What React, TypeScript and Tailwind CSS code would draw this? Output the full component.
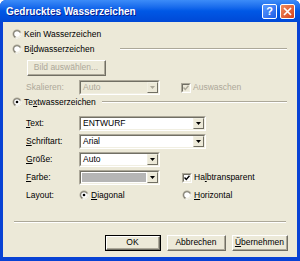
import React from "react";

const FACE = "bg-[#ECE9D8]";

const Radio = ({ checked = false }: { checked?: boolean }) => (
    <svg width="10" height="10" viewBox="0 0 10 10" className="shrink-0">
        <circle cx="5" cy="5" r="4.5" fill="#ACA899" />
        <path d="M9.2 3.2 A4.5 4.5 0 0 1 3.2 9.2 L5 5 Z" fill="#fff" />
        <circle cx="5" cy="5" r="3.6" fill="#716F64" />
        <path d="M8.4 3.4 A3.6 3.6 0 0 1 3.4 8.4 L5 5 Z" fill="#F1EFE2" />
        <circle cx="5" cy="5" r="2.8" fill="#fff" />
        {checked && <circle cx="5" cy="5" r="1.3" fill="#000" />}
    </svg>
);

const Check = ({ checked = false, disabled = false }: { checked?: boolean; disabled?: boolean }) => (
    <div className="w-[10px] h-[10px] shrink-0 border border-t-[#ACA899] border-l-[#ACA899] border-b-white border-r-white">
        <div className={`w-full h-full border border-t-[#716F64] border-l-[#716F64] border-b-[#F1EFE2] border-r-[#F1EFE2] ${disabled ? FACE : "bg-white"}`}>
            {checked && (
                <svg width="6" height="6" viewBox="0 0 6 6" className="block">
                    <path d="M0.5 2.5 L2.3 4.4 L5.5 0.8" stroke={disabled ? "#ACA899" : "#000"} strokeWidth="1.4" fill="none" />
                </svg>
            )}
        </div>
    </div>
);

const DropBtn = ({ disabled = false }: { disabled?: boolean }) => (
    <div className={`w-[11px] h-full ${FACE} border border-t-[#F1EFE2] border-l-[#F1EFE2] border-b-[#716F64] border-r-[#716F64] flex items-center justify-center`}>
        <svg width="5" height="3" viewBox="0 0 5 3">
            <path d="M0 0 H5 L2.5 3 Z" fill={disabled ? "#ACA899" : "#000"} />
        </svg>
    </div>
);

const Combo = ({ value = "", width, disabled = false, swatch = false, drop = true }: { value?: string; width: string; disabled?: boolean; swatch?: boolean; drop?: boolean }) => (
    <div className={`h-[15px] ${width} flex border border-t-[#ACA899] border-l-[#ACA899] border-b-white border-r-white`}>
        <div className={`flex flex-1 min-w-0 border border-t-[#716F64] border-l-[#716F64] border-b-[#F1EFE2] border-r-[#F1EFE2] ${disabled ? FACE : "bg-white"}`}>
            {swatch ? (
                <div className="flex-1 p-[1px]"><div className="w-full h-full bg-[#B5B5B5]" /></div>
            ) : (
                <span className={`flex-1 pl-[2px] leading-[11px] ${disabled ? "text-[#ACA899]" : "text-black"}`}>{value}</span>
            )}
            {drop && <DropBtn disabled={disabled} />}
        </div>
    </div>
);

const Etch = ({ className = "" }: { className?: string }) => (
    <div className={`h-[2px] border-t border-t-[#ACA899] border-b border-b-white ${className}`} />
);

const Btn = ({ children, width, isDefault = false, disabled = false }: { children: React.ReactNode; width: string; isDefault?: boolean; disabled?: boolean }) => (
    <div className={`h-[16px] ${width} ${isDefault ? "border border-black" : ""}`}>
        <div className="w-full h-full border border-t-white border-l-white border-b-[#716F64] border-r-[#716F64]">
            <div className={`w-full h-full flex items-center justify-center border-r border-b border-r-[#ACA899] border-b-[#ACA899] ${disabled ? "text-[#ACA899]" : "text-black"}`}>
                {children}
            </div>
        </div>
    </div>
);

const TitleButton = ({ kind }: { kind: "help" | "close" }) => (
    <div className={`w-[15px] h-[15px] rounded-[2px] border border-white flex items-center justify-center ${kind === "help" ? "bg-gradient-to-br from-[#5B9BFF] to-[#1E5BE6]" : "bg-gradient-to-br from-[#F08A5C] to-[#D4401A]"}`}>
        {kind === "help" ? (
            <span className="text-white font-bold text-[11px] leading-none">?</span>
        ) : (
            <svg width="9" height="9" viewBox="0 0 9 9">
                <path d="M1 1 L8 8 M8 1 L1 8" stroke="#fff" strokeWidth="1.7" />
            </svg>
        )}
    </div>
);

const Label = ({ children }: { children: React.ReactNode }) => (
    <span className="w-[53px] pl-[23px] shrink-0 box-content">{children}</span>
);

export default function App() {
    return (
        <div className="w-[300px] h-[261px] flex flex-col bg-[#0842D4] rounded-t-[6px] font-['Liberation_Sans',Arial,sans-serif] text-[8.5px] text-black overflow-hidden">
            <div className="h-[22px] flex items-center pl-[6px] pr-[5px] bg-gradient-to-b from-[#3C8CF8] via-[#0058E6] to-[#0048D6]">
                <span className="flex-1 text-white font-bold text-[10px] [text-shadow:1px_1px_#0A1E8C]">Gedrucktes Wasserzeichen</span>
                <div className="flex gap-[3px]">
                    <TitleButton kind="help" />
                    <TitleButton kind="close" />
                </div>
            </div>
            <div className={`flex-1 mx-[3px] mb-[4px] ${FACE} flex flex-col`}>
                {/* Kein Wasserzeichen */}
                <div className="h-[14px] mt-[5px] flex items-center pl-[9px] gap-[2px]">
                    <Radio />
                    <span>Kein Wasserzeichen</span>
                </div>
                {/* Bildwasserzeichen */}
                <div className="h-[14px] mt-[1px] flex items-center pl-[9px] gap-[2px] pr-[10px]">
                    <Radio />
                    <span>Bi<u>l</u>dwasserzeichen</span>
                    <Etch className="flex-1 ml-[24px]" />
                </div>
                <div className="mt-[4px] pl-[24px]">
                    <Btn width="w-[79px]" disabled>Bild auswählen...</Btn>
                </div>
                <div className="h-[15px] mt-[4px] flex items-center text-[#ACA899]">
                    <Label>Skalieren:</Label>
                    <Combo value="Auto" width="w-[81px]" disabled />
                    <div className="ml-[21px] flex items-center gap-[2px]">
                        <Check checked disabled />
                        <span>Auswaschen</span>
                    </div>
                </div>
                {/* Textwasserzeichen */}
                <div className="h-[14px] flex items-center pl-[9px] gap-[2px] pr-[10px]">
                    <Radio checked />
                    <span>Te<u>x</u>twasserzeichen</span>
                    <Etch className="flex-1 ml-[4px]" />
                </div>
                <div className="mt-[7px] flex flex-col gap-[3px]">
                    <div className="h-[15px] flex items-center">
                        <Label><u>T</u>ext:</Label>
                        <Combo value="ENTWURF" width="w-[127px]" />
                    </div>
                    <div className="h-[15px] flex items-center">
                        <Label><u>S</u>chriftart:</Label>
                        <Combo value="Arial" width="w-[127px]" />
                    </div>
                    <div className="h-[15px] flex items-center">
                        <Label><u>G</u>röße:</Label>
                        <Combo value="Auto" width="w-[81px]" />
                    </div>
                    <div className="h-[15px] flex items-center">
                        <Label><u>F</u>arbe:</Label>
                        <Combo width="w-[81px]" swatch />
                        <div className="ml-[22px] flex items-center gap-[2px]">
                            <Check checked />
                            <span>Ha<u>l</u>btransparent</span>
                        </div>
                    </div>
                </div>
                <div className="h-[14px] mt-[3px] flex items-center">
                    <Label>Layout:</Label>
                    <div className="flex items-center gap-[2px] w-[103px]">
                        <Radio checked />
                        <span><u>D</u>iagonal</span>
                    </div>
                    <div className="flex items-center gap-[2px]">
                        <Radio />
                        <span><u>H</u>orizontal</span>
                    </div>
                </div>
                <Etch className="mt-[19px] mx-[11px]" />
                <div className="mt-[12px] flex justify-end gap-[6px] pr-[9px]">
                    <Btn width="w-[56px]" isDefault>OK</Btn>
                    <Btn width="w-[59px]">Abbrechen</Btn>
                    <Btn width="w-[56px]"><span><u>Ü</u>bernehmen</span></Btn>
                </div>
            </div>
        </div>
    );
}
